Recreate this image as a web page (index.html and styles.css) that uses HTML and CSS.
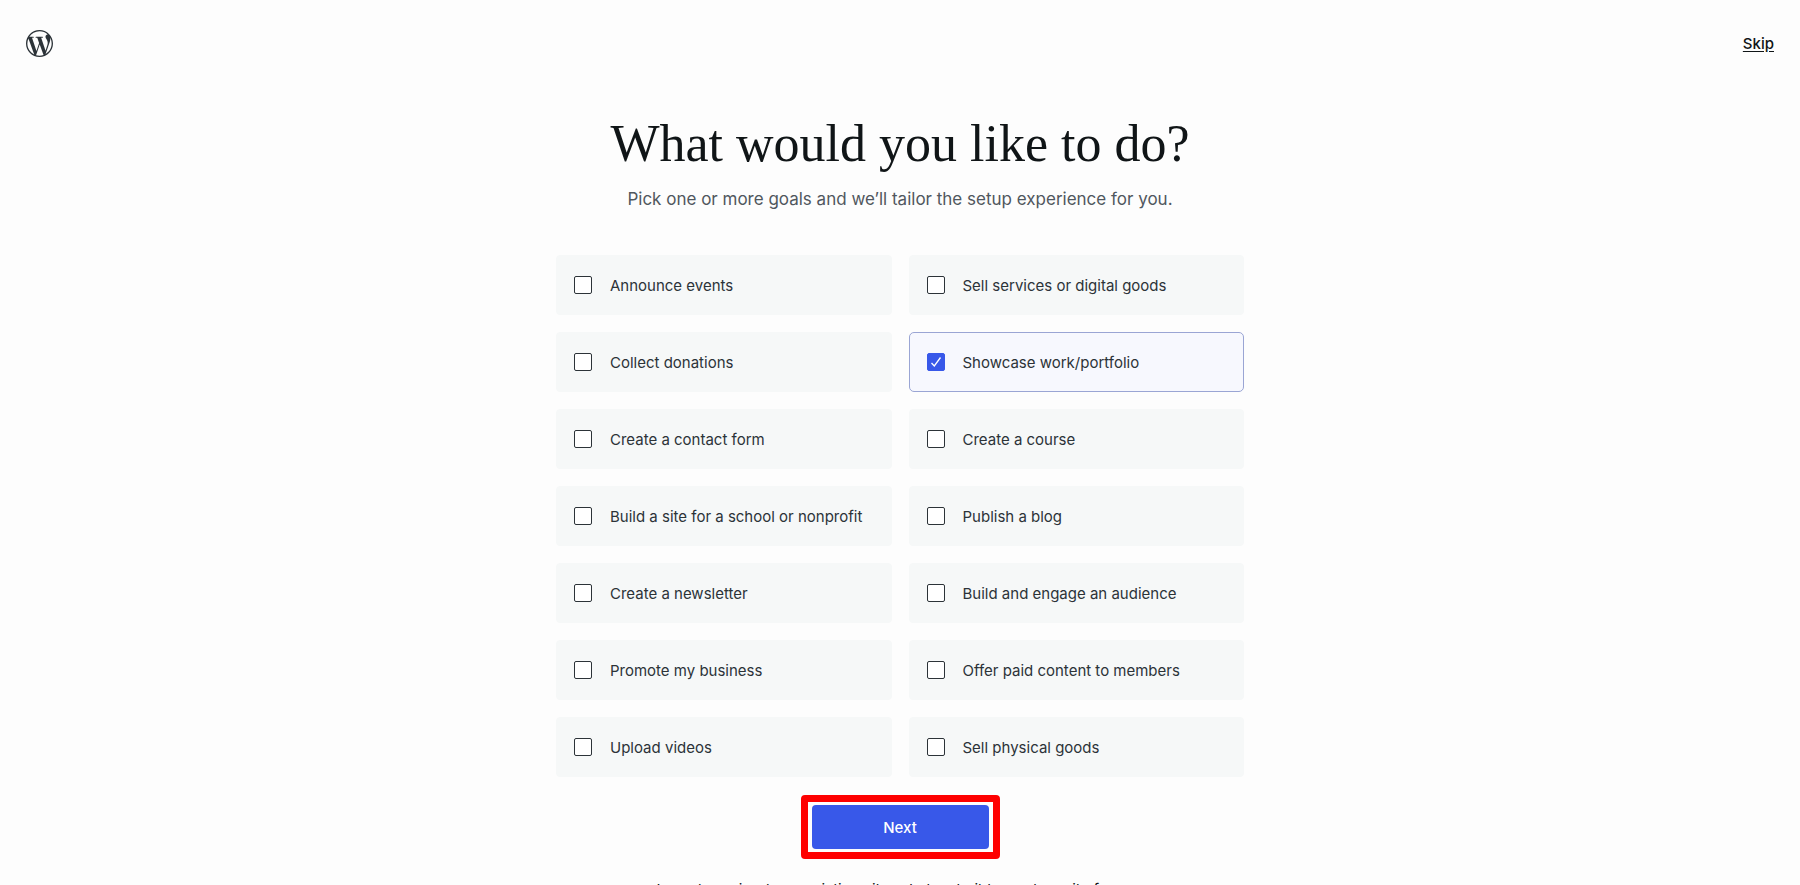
FILE: index.html
```html
<!DOCTYPE html>
<html lang="en">

<head>
    <meta charset="UTF-8">
    <meta name="viewport" content="width=device-width, initial-scale=1.0">
    <title>What would you like to do?</title>
    <link rel="stylesheet" href="styles.css">
</head>

<body>
    <header class="topbar">
        <a href="#" class="logo" aria-label="WordPress">
            <svg viewBox="0 0 24 24" width="27" height="27" fill="currentColor" aria-hidden="true">
                <path d="M21.469 6.825c.84 1.537 1.318 3.3 1.318 5.175 0 3.979-2.156 7.456-5.363 9.325l3.295-9.527c.615-1.54.82-2.771.82-3.864 0-.405-.026-.78-.07-1.11m-7.981.105c.647-.03 1.232-.105 1.232-.105.582-.075.514-.93-.067-.899 0 0-1.755.135-2.88.135-1.064 0-2.85-.15-2.85-.15-.585-.03-.661.855-.075.885 0 0 .54.061 1.125.09l1.68 4.605-2.37 7.08L5.354 6.9c.649-.03 1.234-.1 1.234-.1.585-.075.516-.93-.065-.896 0 0-1.746.138-2.874.138-.2 0-.438-.008-.69-.015C4.911 3.15 8.235 1.215 12 1.215c2.809 0 5.365 1.072 7.286 2.833-.046-.003-.091-.009-.141-.009-1.06 0-1.812.923-1.812 1.914 0 .89.513 1.643 1.06 2.531.411.72.89 1.643.89 2.977 0 .915-.354 1.994-.821 3.479l-1.075 3.585-3.9-11.61.001.014zM12 22.784c-1.059 0-2.081-.153-3.048-.437l3.237-9.406 3.315 9.087c.024.053.05.101.078.149-1.12.393-2.325.609-3.582.609M1.211 12c0-1.564.336-3.05.935-4.39L7.29 21.709C3.694 19.96 1.212 16.271 1.211 12M12 0C5.385 0 0 5.385 0 12s5.385 12 12 12 12-5.385 12-12S18.615 0 12 0"/>
            </svg>
        </a>
        <a href="#" class="skip">Skip</a>
    </header>

    <main class="goals">
        <h1>What would you like to do?</h1>
        <p class="subtitle">Pick one or more goals and we’ll tailor the setup experience for you.</p>

        <form id="goalsForm">
            <div class="goal-list">
                <label class="goal"><input type="checkbox" name="goal" value="events">Announce events</label>
                <label class="goal"><input type="checkbox" name="goal" value="services">Sell services or digital goods</label>
                <label class="goal"><input type="checkbox" name="goal" value="donations">Collect donations</label>
                <label class="goal"><input type="checkbox" name="goal" value="portfolio" checked>Showcase work/portfolio</label>
                <label class="goal"><input type="checkbox" name="goal" value="contact">Create a contact form</label>
                <label class="goal"><input type="checkbox" name="goal" value="course">Create a course</label>
                <label class="goal"><input type="checkbox" name="goal" value="nonprofit">Build a site for a school or nonprofit</label>
                <label class="goal"><input type="checkbox" name="goal" value="blog">Publish a blog</label>
                <label class="goal"><input type="checkbox" name="goal" value="newsletter">Create a newsletter</label>
                <label class="goal"><input type="checkbox" name="goal" value="audience">Build and engage an audience</label>
                <label class="goal"><input type="checkbox" name="goal" value="business">Promote my business</label>
                <label class="goal"><input type="checkbox" name="goal" value="members">Offer paid content to members</label>
                <label class="goal"><input type="checkbox" name="goal" value="videos">Upload videos</label>
                <label class="goal"><input type="checkbox" name="goal" value="physical">Sell physical goods</label>
            </div>
            <div class="next-frame">
                <button type="submit" class="next">Next</button>
            </div>
        </form>

        <div class="more-links">
            <a href="#">Import or migrate an existing site</a>
            <a href="#">Let us build a custom site for you</a>
        </div>
    </main>
</body>

</html>
```
FILE: styles.css
```css
* {
    box-sizing: border-box;
}

body {
    margin: 0;
    height: 100vh;
    overflow: hidden;
    background-color: #fdfdfd;
    color: #2c3338;
    font-family: Inter, "Liberation Sans", sans-serif;
    font-size: 16px;
}

.topbar {
    display: flex;
    justify-content: space-between;
    align-items: center;
    height: 87px;
    padding: 0 26px;
}

.logo {
    display: flex;
    color: #2c3338;
}

.skip {
    color: #101517;
    font-size: 15px;
    font-weight: 500;
    text-underline-offset: 2px;
}

.goals {
    max-width: 688px;
    margin: 0 auto;
    text-align: center;
}

h1 {
    margin: 27px 0 13px;
    color: #101517;
    font-family: "Liberation Serif", serif;
    font-size: 52px;
    font-weight: 400;
    line-height: 60px;
    white-space: nowrap;
}

.subtitle {
    margin: 0 0 44px;
    color: #50575e;
    font-size: 17px;
    line-height: 24px;
}

.goal-list {
    display: grid;
    grid-template-columns: 1fr 1fr;
    gap: 17px;
}

.goal {
    display: flex;
    align-items: center;
    gap: 18px;
    height: 60px;
    padding: 0 17px;
    border: 1px solid #f6f8f8;
    border-radius: 4px;
    background-color: #f6f8f8;
    font-size: 15px;
    text-align: left;
    cursor: pointer;
}

.goal:has(input:checked) {
    border-color: #9aa5d4;
    border-radius: 5px;
    background-color: #f7f8fe;
}

.goal input {
    appearance: none;
    flex: none;
    width: 18px;
    height: 18px;
    margin: 0;
    border: 1px solid #2c3338;
    border-radius: 2px;
    background-color: white;
}

.goal input:checked {
    border-color: #3858e9;
    background: #3858e9 url("data:image/svg+xml,%3Csvg xmlns='http://www.w3.org/2000/svg' viewBox='0 0 16 16'%3E%3Cpath d='M3.5 9l2.8 3L12.5 3.5' fill='none' stroke='white' stroke-width='1.3'/%3E%3C/svg%3E") center / 16px no-repeat;
}

/* Highlight around the main action */
.next-frame {
    width: 199px;
    margin: 18px auto 0;
    padding: 3px 4px;
    border: 7px solid #fe0000;
    border-radius: 4px;
}

.next {
    display: block;
    width: 100%;
    height: 44px;
    border: none;
    border-radius: 4px;
    background-color: #3858e9;
    color: white;
    font-family: inherit;
    font-size: 15px;
    font-weight: 500;
    cursor: pointer;
}

.more-links {
    display: flex;
    justify-content: center;
    gap: 20px;
    margin-top: 19px;
    font-size: 15px;
    line-height: 24px;
}

.more-links a {
    color: #101517;
}
```
